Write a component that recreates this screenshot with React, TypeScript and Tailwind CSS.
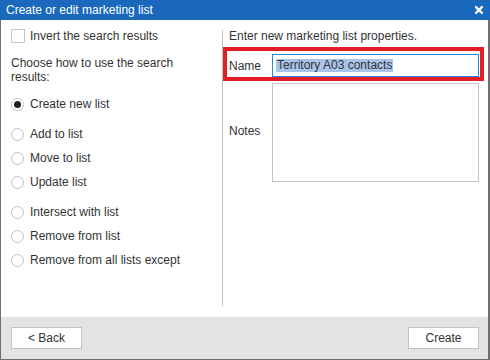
import React from "react";

function Radio({ checked, label }: { checked?: boolean; label: string }) {
  return (
    <div className="flex h-[24px] items-center">
      <div className="flex h-[13px] w-[13px] items-center justify-center rounded-full border border-[#c2c2c2] bg-white">
        {checked && <div className="h-[7px] w-[7px] rounded-full bg-[#1f1f1f]" />}
      </div>
      <span className="ml-[6px]">{label}</span>
    </div>
  );
}

export default function App() {
  return (
    <div className="flex h-[360px] w-[490px] flex-col bg-white font-['Liberation_Sans',Arial,sans-serif] text-[12px] leading-[14px] text-[#333333]">
      <div className="flex h-[20px] items-center justify-between bg-[#1a69bd] pl-[6px] pr-[7px] text-white">
        <span>Create or edit marketing list</span>
        <svg width="8" height="8" viewBox="0 0 8 8">
          <path d="M1 1 L7 7 M7 1 L1 7" stroke="white" strokeWidth="2.4" strokeLinecap="square" />
        </svg>
      </div>
      <div className="flex flex-1 flex-col border-b border-l border-r-2 border-[#6f6f6f]">
        <div className="flex flex-1">
          <div className="w-[221px] pl-[10px] pt-[4px]">
            <div className="flex h-[24px] items-center">
              <div className="h-[14px] w-[14px] border border-[#c4c4c4] bg-white" />
              <span className="ml-[5px]">Invert the search results</span>
            </div>
            <p className="mt-[8px] w-[190px]">Choose how to use the search results:</p>
            <div className="mt-[8px]">
              <Radio checked label="Create new list" />
            </div>
            <div className="mt-[6px]">
              <Radio label="Add to list" />
              <Radio label="Move to list" />
              <Radio label="Update list" />
            </div>
            <div className="mt-[6px]">
              <Radio label="Intersect with list" />
              <Radio label="Remove from list" />
              <Radio label="Remove from all lists except" />
            </div>
          </div>
          <div className="mb-[11px] mt-[10px] w-px bg-[#c0c0c0]" />
          <div className="flex-1 pt-[4px]">
            <div className="flex h-[23px] items-center pl-[6px]">Enter new marketing list properties.</div>
            <div className="relative flex h-[34px] items-start pl-[6px] pt-[7px]">
              <div className="pointer-events-none absolute bottom-0 left-0 right-[4px] top-0 border-4 border-[#e41e26]" />
              <div className="flex h-[23px] w-[43px] items-center">Name</div>
              <div className="flex h-[23px] w-[207px] items-center border border-[#1e8ae6] bg-white pl-[3px]">
                <span className="bg-[#a9c4ea] px-px leading-[13px]">Territory A03 contacts</span>
              </div>
            </div>
            <div className="mt-[2px] flex items-center pl-[6px]">
              <div className="w-[43px] pb-[4px]">Notes</div>
              <div className="h-[99px] w-[207px] border border-[#c3c3c3] bg-white" />
            </div>
          </div>
        </div>
        <div className="flex h-[42px] items-start justify-between bg-[#e3e3e3] pl-[10px] pr-[9px] pt-[10px]">
          <button className="flex h-[22px] w-[71px] items-center justify-center border border-[#c3c3c3] bg-white text-[#333333]">
            &lt; Back
          </button>
          <button className="flex h-[22px] w-[71px] items-center justify-center border border-[#c3c3c3] bg-white text-[#333333]">
            Create
          </button>
        </div>
      </div>
    </div>
  );
}
